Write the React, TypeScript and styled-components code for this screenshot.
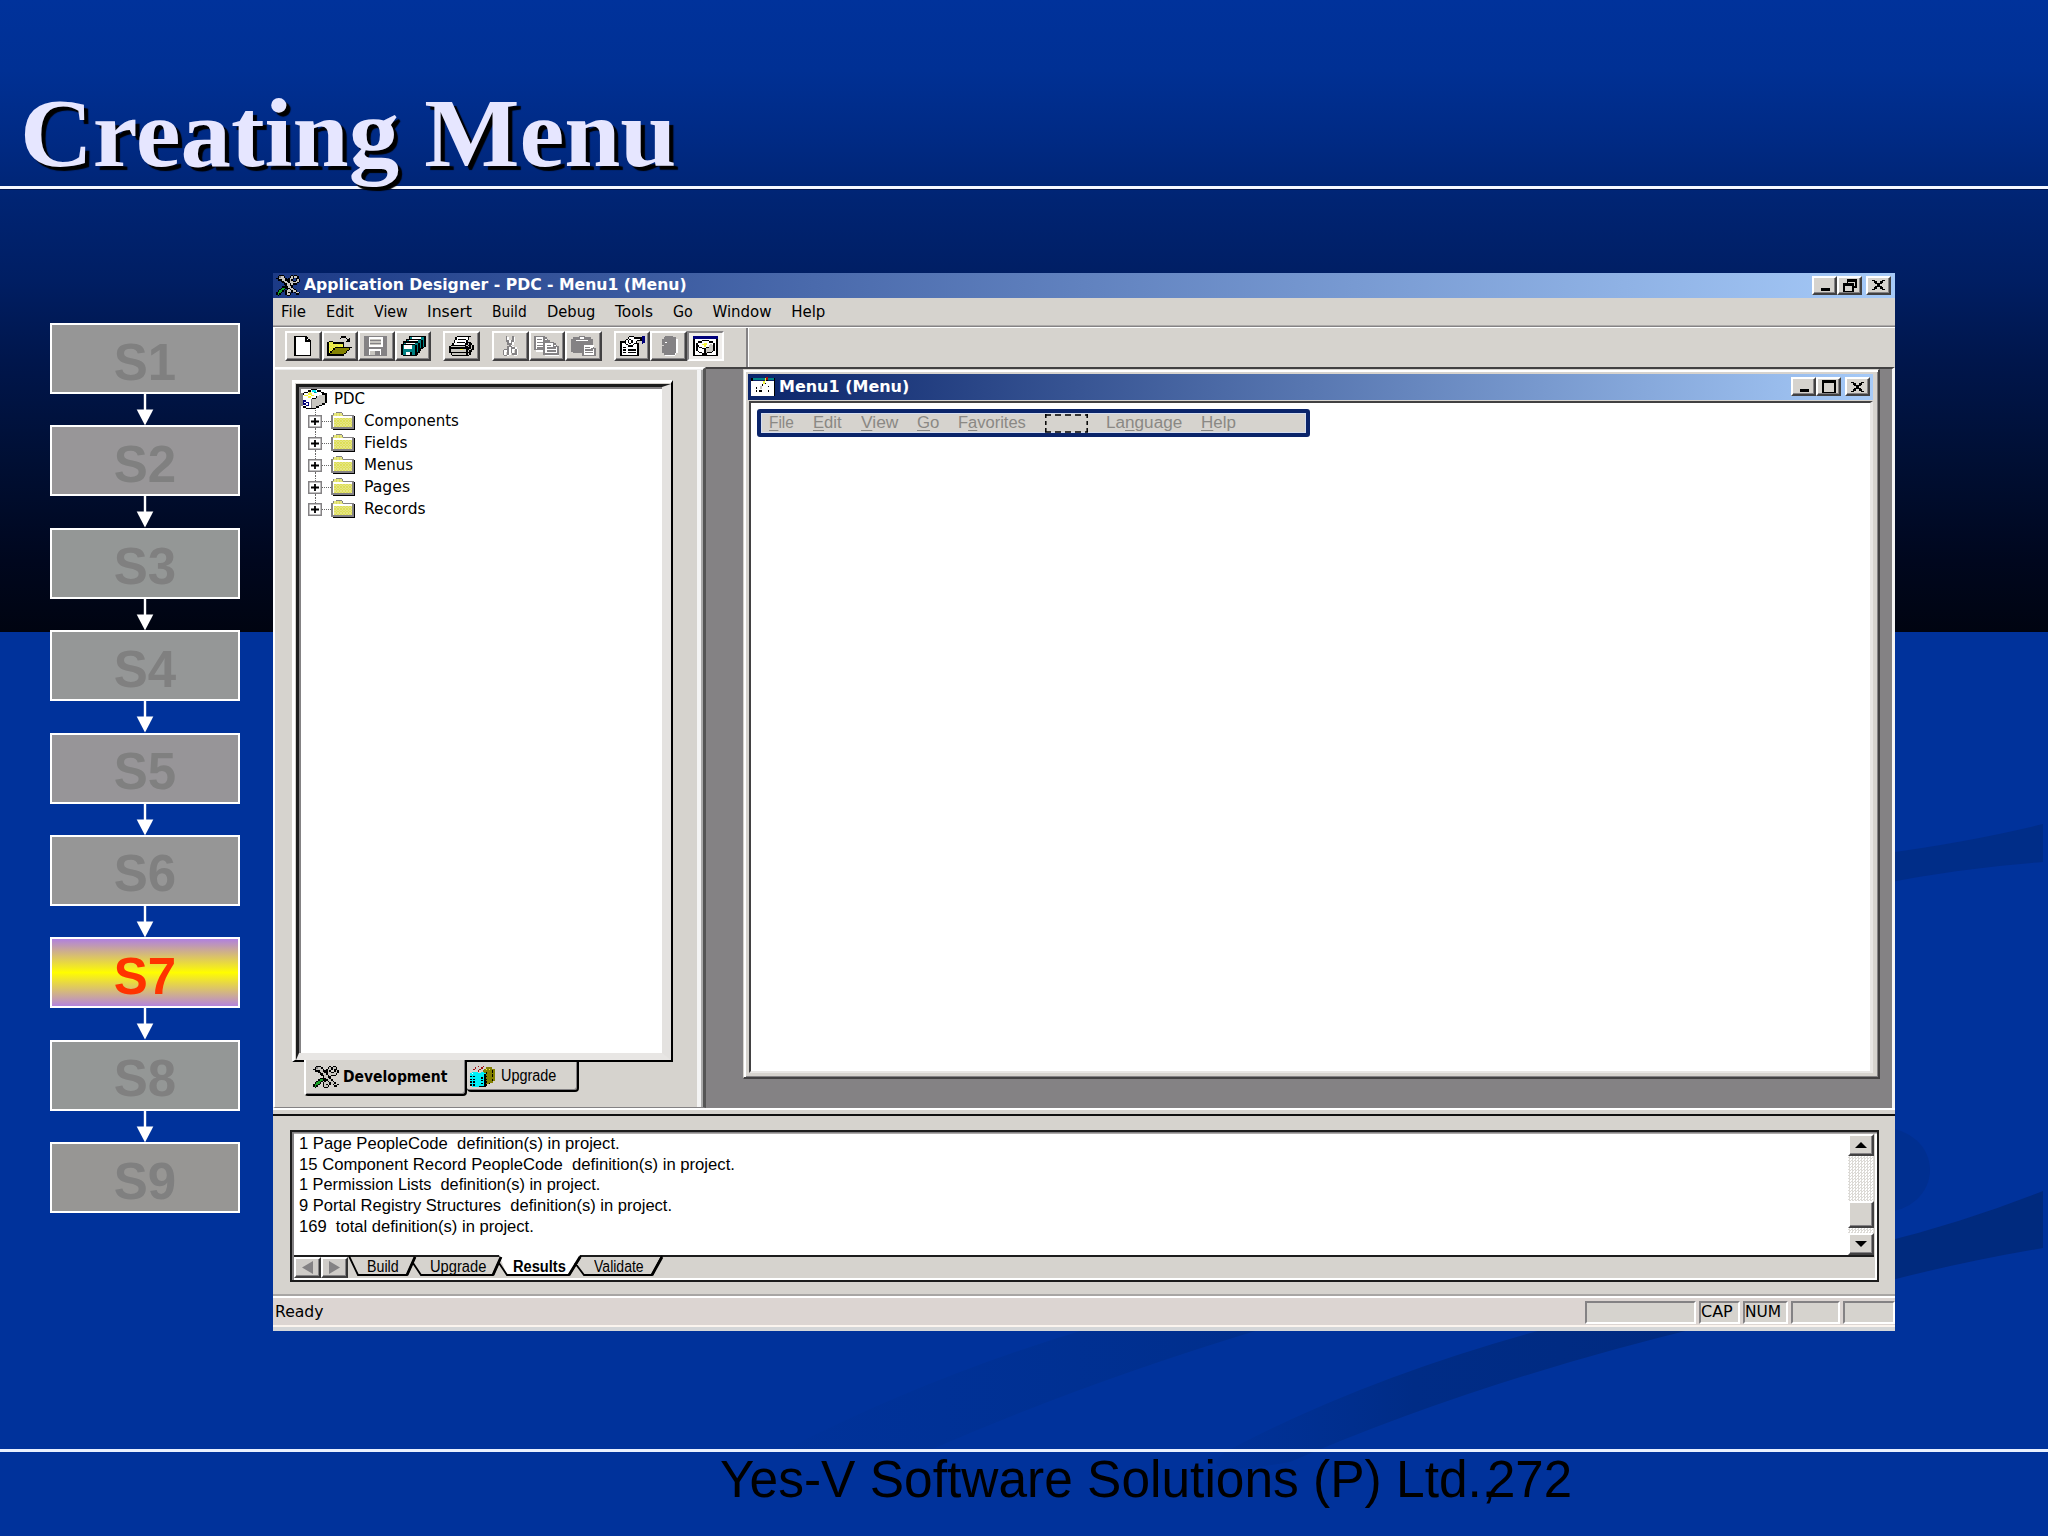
import React, { useLayoutEffect, useRef, useState } from 'react';
import styled, { createGlobalStyle, css } from 'styled-components';

const FACE = '#d6d3ce';
const SHADE = '#848284';
const UI = '"DejaVu Sans", sans-serif';
const SANS = '"Liberation Sans", Arial, sans-serif';

const Global = createGlobalStyle`
  body { margin: 0; background: #00329b; }
  * { box-sizing: border-box; }
`;

/* ---------- text stretched to a set width ---------- */
const FitBox = styled.span<{ $w: number }>`
  display: block;
  flex: none;
  width: ${(p) => p.$w}px;
  white-space: pre;
`;
const FitInner = styled.span`
  display: inline-block;
  transform-origin: 0 50%;
`;
function Fit({ w, children }: { w: number; children: React.ReactNode }) {
  const ref = useRef<HTMLSpanElement>(null);
  const [scale, setScale] = useState(1);
  useLayoutEffect(() => {
    if (ref.current) setScale(w / ref.current.offsetWidth);
  }, [w]);
  return (
    <FitBox $w={w}>
      <FitInner ref={ref} style={{ transform: `scaleX(${scale})` }}>{children}</FitInner>
    </FitBox>
  );
}

/* ---------- bitmap icons ---------- */
const PALETTE: Record<string, string> = {
  K: '#000000', W: '#ffffff', G: '#848284', L: '#c8c6c0', Y: '#f4f43c', O: '#848200',
  T: '#008284', B: '#00007b', C: '#00f0f8', E: '#18a028', R: '#a01010', P: '#dede58', Q: '#e6e684',
};
const IconSvg = styled.svg`
  display: block;
  flex: none;
`;
function Bitmap({ rows, w, h }: { rows: string[]; w: number; h: number }) {
  const cols = Math.max(...rows.map((r) => r.length));
  const cells: React.ReactNode[] = [];
  rows.forEach((row, y) => {
    let x = 0;
    while (x < row.length) {
      const c = row[x];
      let n = 1;
      while (row[x + n] === c) n++;
      if (PALETTE[c]) cells.push(<rect key={`${x}-${y}`} x={x} y={y} width={n} height={1} fill={PALETTE[c]} />);
      x += n;
    }
  });
  return (
    <IconSvg width={w} height={h} viewBox={`0 0 ${cols} ${rows.length}`} preserveAspectRatio="none" shapeRendering="crispEdges">
      {cells}
    </IconSvg>
  );
}

const NEW = [
  '..KKKKKKKK......', '..KWWWWWWKK.....', '..KWWWWWWKWK....', '..KWWWWWWKKKK...', '..KWWWWWWWWWK...',
  '..KWWWWWWWWWK...', '..KWWWWWWWWWK...', '..KWWWWWWWWWK...', '..KWWWWWWWWWK...', '..KWWWWWWWWWK...',
  '..KWWWWWWWWWK...', '..KWWWWWWWWWK...', '..KWWWWWWWWWK...', '..KKKKKKKKKKK...'];
const OPEN = [
  '.........KKK....', '........K...K.K.', '.............KK.', '.KKK........KKK.', 'KYPYKKKKKKK.....', 'KPYPYPYPYPK.....',
  'KYPYPYPYPYK.....', 'KPYPYKKKKKKKKKKK', 'KYPYKOOOOOOOOOK.', 'KPYKOOOOOOOOOK..', 'KYKOOOOOOOOOK...', 'KKOOOOOOOOOK....',
  'KKKKKKKKKKK.....'];
const SAVE = [
  'GGGGGGGGGGGGGGG.', 'GGGWWWWWWWWWGGG.', 'GGGWLLLLLLLWGGG.', 'GGGWGGGGGGGWGGG.', 'GGGWLLLLLLLWGGG.', 'GGGWGGGGGGGWGGG.',
  'GGGWLLLLLLLWGGG.', 'GGGWWWWWWWWWGGG.', 'GGGGGGGGGGGGGGG.', 'GGGGGGGGGGGGGGG.', 'GGGWWWWWWWWGGGG.', 'GGGWLLLGGGWGGGG.',
  'GGGWLLLGGGWGGGG.', 'GGGWLLLGGGWGGGG.', 'GGGGGGGGGGGGGGG.'];
const SAVEALL = [
  '.....KKKKKKKKKKK', '.....KTWWWWWWTTK', '...KKKKKKKKKKTTK', '...KTWWWWWWTTKTK', '.KKKKKKKKKKTTKTK', '.KTWWWWWWTTKTKTK',
  'KKKKKKKKKTTKTKTK', 'KTWWWWWTTKTKTKTK', 'KTWWWWWTTKTKTKK.', 'KTWWWWWTTKTKKK..', 'KTTTTTTTTKTKK...', 'KTTTTTTTTKTK....',
  'KTTWWWKTTKKK....', 'KTTWWWKTTKK.....', '.KKKKKKKKK......'];
const PRINT = [
  '.....KKKKKKKKK..', '....KWWWWWWWK...', '....KWKKKKKWK...', '...KWWWWWWWK....', '...KWKKKKKWKKK..', '..KWWWWWWWKKLKK.',
  '.KKKKKKKKKKLKKLK', 'KLLLLLLLLLKKLKLK', 'KKKKKKKKKKKKKKLK', 'KLLLLLLYYLLKKLKK', 'KLLLLLLLLLLKLKK.', 'KKKKKKKKKKKKKK..',
  '.KLLLLLLLLLKLK..', '..KKKKKKKKKKK...'];
const CUT = [
  '.....G...G......', '.....GW..GW.....', '.....GW..GW.....', '.....GGWGGW.....', '......GWGW......', '......GGGW......',
  '.......GW.......', '......GGGW......', '......GWGGGW....', '....GGGWGWWGW...', '...GWWGWGW.GW...', '...GW.GWGW.GW...',
  '...GW.GW.GGGW...', '....GGW...WW....'];
const COPY = [
  'GGGGGGG.........', 'GWWWWWGG........', 'GWGGGWGWG.......', 'GWWWWWGGGG......', 'GWGGGGGGGGGGG...', 'GWWWWWGWWWWWGG..',
  'GWGGGGGWGGGWGWG.', 'GWWWWWGWWWWWGGGG', 'GWGGGGGWGGGGGGWG', 'GGGGGGGWWWWWWWWG', '.WWWWWGWGGGGGGWG', '......GWWWWWWWWG',
  '......GGGGGGGGGG', '.......WWWWWWWWW'];
const PASTE = [
  '.....GGGG.......', '.GGGGGWWGGGGG...', 'GGGGGGGGGGGGGG..', 'GGGWWWWWWWWGGG..', 'GGGGGGGGGGGGGG..', 'GGGGGGGGGGGGGG..',
  'GGGGGGGGGGGGGG..', 'GGGGGGGGWWWWWWW.', 'GGGGGGGGWGGGWWG.', 'GGGGGGGGWWWWWGGG', 'GGGGGGGGWGGGGGWG', 'GGGGGGGGWWWWWWWG',
  '.GGGGGGGWGGGGGWG', '.......GWWWWWWWG', '.......GGGGGGGGG'];
const PROPS = [
  '......KKK.....BB', '.....KWWWKKKKKBB', '....KWKWWWWWWKBB', '...KWKWKWWWKKKBB', 'KKKKWKWKWWK...BB', 'KWWKWWKWWKKK..B.',
  'KWWWKWWWKWWK....', 'KWWWWKKKWWWK....', 'KWKKWWWWWWWK....', 'KWWWWWWWWWWK....', 'KWKKWKKKKKWK....', 'KWWWWWWWWWWK....',
  'KWKKWKKKKKWK....', 'KWWWWWWWWWWK....', 'KKKKKKKKKKKK....'];
const DATABASE = [
  '......GGGGG.....', '.....GGGGGGGG...', '....GGGGGGGGGW..', '....GGGGGGGGGW..', '....GGWGGGGGGW..', '....GGGGGGGGGW..',
  '.....GGGGGGGGW..', '....GGGGGGGGGW..', '....GGGGGGGGGW..', '....GGGGGGGGGW..', '....GGGGGGGGGW..', '....GGGGGGGGGW..',
  '.....GGGGGGGW...', '......WWWWWW....'];
const PROJVIEW = [
  'BBBBBBBBBBBBBBBB', 'BBBBBBBBBBBBBBBB', 'KWWWWWWWWWWWWWWK', 'KWWWWWKKKKWWWWWK', 'KWWKKKWWWWKKKWWK', 'KWKWWWWYYWWWWKWK',
  'KWKWWWYYYWWLWKWK', 'KWKKWWWYWWLLLKWK', 'KWKWKKWWKKLLLKWK', 'KWKWWWKKLLLLLKWK', 'KWKWWWWKLLLLLKWK', 'KWWKWWWKLLLLKWWK',
  'KWWWKKWKLKKKWWWK', 'KWWWWWKKKWWWWWWK', 'KKKKKKKKKKKKKKKK'];
const TOOLS = [
  '..KKK.....K.KK..', '.KGLLK...KLKLLK.', 'KKLLLLK.KLLK.KK.', '.KKKLLKKKLK..KLK', '...KKLLKKLLKKLLK', '....KKLLKLLLLLK.',
  '.....KKLLKLKKK..', '......KLLKK.....', '....KKKKLLK.....', '...KEEKKKLLK....', '..KEEK.KLKLLK...', '.KEEK.KLLLKLLK..',
  'KEEK..KLK.K.KLLK', 'KEK...KLLK...KK.', '.K.....KK.......'];
const CUBE = [
  '......KKKK......', '....KKWCCWKK....', '..KKWYWWTCWWKK..', 'GKWWYYYWWWWWWKKK', 'GWYYWWYYWWWLLLLK', 'GWWWYYWWWKLLLLLK',
  'GWWWWWWKKLLLLLLK', 'GWWWWWGLLLLLLLLK', 'GBBWWWGLLLLLLLLK', 'GBWBBWGLLLLLLLLK', 'GBBWBWGLLLLLLKK.', 'GWWBBWGLLLLKK...',
  '.KKWWWGLLKK.....', '...KKKKKK.......'];
const FOLDER = [
  '...GGGG.........', '.GQPQPQG........', 'GPQPQPQPGGGGGGG.', 'GWWWWWWWWWWWWWGK', 'GWPQPQPQPQPQPQGK', 'GWQPQPQPQPQPQPGK',
  'GWPQPQPQPQPQPQGK', 'GWQPQPQPQPQPQPGK', 'GWPQPQPQPQPQPQGK', 'GWQPQPQPQPQPQPGK', 'GWPQPQPQPQPQPQGK', 'GGGGGGGGGGGGGGGK',
  '.KKKKKKKKKKKKKKK'];
const UPGRADE = [
  '.....R..R.......', '...R...R..OOOO..', '..R...R..OYOYOOO', '.....R..OOOOOOKO', '.CCCC..CCOKOOOKO', 'CWCCCCCCCCKOOOOO',
  'CCCCCCCCCKOOOOKO', 'KCKCCCCCCKKOOOKO', 'CCCCCCCKCKOOOOOO', 'KCKCCCCCCKKOOOKO', 'CCCCCCCKCKOOOOKO', 'KCKCCCCCCKKOOOO.',
  'CCCCCCCKCKOOK...', 'KCKCCCCCCKK.....', '.CCCCCKKKK......'];
const MENUDOC = [
  '..........R.....', 'KTTTTTTTTYRTTTTK', 'K........YK....K', 'WWWWWWWWYWWWWWWK', 'WWWWWWWWYKWWWWWK', 'WWWWWWWKWWWWWWWK',
  'WWWWWWLWWWWKWWWK', 'WWWKWWLWWWWWWWWK', 'WWWWWWWWWWWWWWWK', 'WWWKWKKWWWWKWWWK', 'WWWWWWWWWWWWWWWK', 'WWWWWWWWWWWWWWWK',
  'WWWWWWWWWWWWWWWK'];
const MIN = ['........', '........', '........', '........', '........', '........', '.KKKKKK.', '.KKKKKK.'];
const MAX = ['KKKKKKKKK', 'KKKKKKKKK', 'K.......K', 'K.......K', 'K.......K', 'K.......K', 'K.......K', 'K.......K', 'KKKKKKKKK'];
const RESTORE = ['..KKKKKK', '..KKKKKK', '..K....K', 'KKKKKK.K', 'KKKKKK.K', 'K....KKK', 'K....K..', 'K....K..', 'KKKKKK..'];
const CLOSE = ['KK....KK', '.KK..KK.', '..KKKK..', '...KK...', '..KKKK..', '.KK..KK.', 'KK....KK'];

/* ---------- slide ---------- */
const Slide = styled.div`
  position: relative;
  width: 2048px;
  height: 1536px;
  overflow: hidden;
  display: flex;
  flex-direction: column;
  background: linear-gradient(#00329b 0, #003094 70px, #002a84 140px, #002473 200px, #001e63 280px,
    #00164c 360px, #000f34 460px, #00071e 560px, #000411 632px, #00329b 632px);
`;
const Swooshes = styled.svg`
  position: absolute;
  inset: 0;
`;
const Header = styled.header`
  position: relative;
  height: 189px;
  flex: none;
  border-bottom: 3px solid #f4f7ff;
  box-shadow: 0 1px 0 #00154f;
  padding: 79px 0 0 20px;
`;
const Title = styled.h1`
  margin: 0;
  font: bold 97px/110px "Liberation Serif", "Times New Roman", serif;
  color: #e6e6ff;
  text-shadow: 4px 4px 1px #000;
`;
const Body = styled.main`
  height: 1260px;
  flex: none;
  display: flex;
  align-items: flex-start;
  padding-left: 50px;
  isolation: isolate;
`;
const Footer = styled.footer`
  position: relative;
  flex: 1;
  display: flex;
  border-top: 3px solid #e8f0ff;
  padding: 0 0 0 720px;
  font: 51px/56px ${SANS};
  color: #000;
`;
const PageNo = styled.div`
  margin-left: -9px;
`;

/* ---------- step chart ---------- */
const Steps = styled.div`
  margin-top: 134px;
  width: 190px;
`;
const Step = styled.div<{ $active: boolean; $tone: string }>`
  height: 71px;
  border: 2.5px solid #fff;
  display: flex;
  align-items: center;
  justify-content: center;
  padding-top: 8px;
  font: bold 51px/60px ${SANS};
  color: ${(p) => (p.$active ? '#ff3300' : '#808080')};
  background: ${(p) => (p.$active ? 'linear-gradient(#b080e0, #fffd00 50%, #b484dc)' : p.$tone)};
`;
const Arrow = styled.svg`
  display: block;
  margin: 0 auto;
`;

/* ---------- window ---------- */
const AppWindow = styled.section`
  margin: 84px 0 0 33px;
  width: 1622px;
  height: 1058px;
  background: ${FACE};
  display: flex;
  flex-direction: column;
  font: 15px/20px ${UI};
  color: #000;
`;
const TitleBar = styled.div<{ $child?: boolean }>`
  height: ${(p) => (p.$child ? 26 : 25)}px;
  flex: none;
  display: flex;
  align-items: center;
  gap: 4px;
  padding: 0 ${(p) => (p.$child ? 3 : 4)}px 1px ${(p) => (p.$child ? 3 : 3)}px;
  background: ${(p) => (p.$child ? 'linear-gradient(90deg, #0a246a, #a6caf8)' : 'linear-gradient(90deg, #1c3a86, #a6caf8)')};
  color: #fff;
  font-weight: bold;
`;
const Caption = styled.div`
  flex: 1;
`;
const raised = css`
  border-style: solid;
  border-width: 2px;
  border-color: #fff #424142 #424142 #fff;
  box-shadow: inset -1px -1px 0 ${SHADE};
`;
const WinButtons = styled.div`
  display: flex;
  align-items: center;
`;
const WinButton = styled.span<{ $gap?: boolean }>`
  ${raised}
  width: 25px;
  height: 19px;
  margin-left: ${(p) => (p.$gap ? 4 : 0)}px;
  background: ${FACE};
  display: flex;
  align-items: center;
  justify-content: center;
`;
const MenuBar = styled.nav`
  height: 30px;
  flex: none;
  display: flex;
  align-items: center;
  gap: 19.8px;
  padding: 0 0 1px 8px;
  border-bottom: 1px solid #fff;
  box-shadow: inset 0 -1.5px 0 ${SHADE};
`;
const ToolBar = styled.div`
  height: 39px;
  flex: none;
  display: flex;
  padding: 3px 0 0 10px;
  border-left: 2px solid #fff;
`;
const ToolGroup = styled.div`
  display: flex;
  height: 30px;
  margin-right: 12px;
`;
const Tool = styled.span<{ $pressed?: boolean }>`
  ${raised}
  width: 36.6px;
  background: ${FACE};
  display: flex;
  align-items: center;
  justify-content: center;
  ${(p) => p.$pressed && css`
    border-color: ${SHADE} #fff #fff ${SHADE};
    box-shadow: none;
    background: #f0eeec;
  `}
`;
const ToolEnd = styled.span`
  width: 3px;
  height: 39px;
  margin: -3px 0 0 10px;
  background: linear-gradient(90deg, ${SHADE} 50%, #fff 50%);
`;
const Workspace = styled.div`
  height: 741px;
  flex: none;
  display: flex;
`;
const Side = styled.aside`
  width: 433px;
  flex: none;
  padding: 11px 0 0 17px;
  border-style: solid;
  border-width: 2px 3px 1px 2px;
  border-color: #fff #555 ${SHADE} #fff;
  box-shadow: inset 0 1px 0 #eee, inset -2px 0 0 #aaa, inset -6px 0 0 #f4f4f4;
`;
const TreeFrame = styled.div`
  width: 381px;
  height: 682px;
  border-style: solid;
  border-width: 3px 2px 2px 3px;
  border-color: #fff #000 #000 #fff;
  padding: 1px 0 0 1px;
`;
const Tree = styled.div`
  height: 100%;
  background: #fff;
  border-style: solid;
  border-width: 3px 9px 7px 3px;
  border-color: #1c1c1c #e4e2e0 #e8e6e4 #1c1c1c;
  box-shadow: inset 2px 2px 0 ${SHADE};
  padding: 1px 0 0 2px;
`;
const TreeRow = styled.div<{ $root?: boolean }>`
  height: 22px;
  display: flex;
  align-items: center;
  padding-left: ${(p) => (p.$root ? 0 : 7)}px;
  gap: ${(p) => (p.$root ? 7 : 0)}px;
`;
const Expander = styled.span`
  width: 14px;
  height: 22px;
  display: flex;
  flex-direction: column;
  align-items: center;
`;
const VDots = styled.span<{ $off?: boolean }>`
  height: 5px;
  border-left: 1.5px dotted ${(p) => (p.$off ? 'transparent' : '#666')};
`;
const PlusBox = styled.svg`
  display: block;
  flex: none;
`;
const HDots = styled.span`
  width: 9px;
  border-top: 1.5px dotted #666;
`;
const FolderSlot = styled.span`
  width: 33px;
`;
const SideTabs = styled.div`
  display: flex;
  align-items: flex-start;
  margin: -2px 0 0 12px;
`;
const SideTab = styled.div<{ $active?: boolean }>`
  width: ${(p) => (p.$active ? 163 : 112)}px;
  height: ${(p) => (p.$active ? 36 : 32)}px;
  display: flex;
  align-items: center;
  gap: ${(p) => (p.$active ? 4 : 6)}px;
  padding-left: ${(p) => (p.$active ? 7 : 3)}px;
  background: ${FACE};
  border: solid #000;
  border-width: ${(p) => (p.$active ? '0 2px 2px 2px' : '2px 2px 2px 0')};
  border-left-color: #fff;
  border-radius: 0 0 4px 4px;
  box-shadow: inset -1px -1px 0 ${SHADE};
  font: ${(p) => (p.$active ? 'bold 15px/20px ' + UI : '16px/20px ' + SANS)};
`;
const Mdi = styled.div`
  flex: 1;
  background: ${SHADE};
  border-top: 2px solid #424142;
  border-right: 3px solid #f4f4f4;
  padding: 0 0 0 37px;
`;
const Child = styled.section`
  width: 1137px;
  height: 710px;
  background: ${FACE};
  border-style: solid;
  border-width: 1px 2px 2px 1px;
  border-color: ${FACE} #424142 #424142 ${FACE};
  box-shadow: inset 2px 2px 0 #fff, inset -1px -1px 0 ${SHADE};
  padding: 4px 5px 4px 4px;
  display: flex;
  flex-direction: column;
`;
const ChildBody = styled.div`
  flex: 1;
  margin: 1px 0 0 1px;
  background: #fff;
  border-style: solid;
  border-width: 2px 3px 2px 2px;
  border-color: #424142 #e8e6e4 #e8e6e4 #424142;
  padding: 6px 0 0 6px;
`;
const MenuDesign = styled.div`
  width: 553px;
  height: 28px;
  border: 4px solid #0a246a;
  border-radius: 3px;
  background: ${FACE};
  box-shadow: inset 0 0 0 1px #d4ddf0;
  display: flex;
  align-items: center;
  gap: 19px;
  padding-left: 8px;
  font: 16px/18px ${SANS};
  color: #8a8884;
`;
const Accel = styled.span`
  text-decoration: underline;
  text-underline-offset: 2px;
`;
const Dashed = styled.svg`
  display: block;
  flex: none;
  margin-right: -1px;
`;
const Splitter = styled.div`
  height: 8px;
  flex: none;
  border-top: 2px solid #fff;
  border-bottom: 2px solid #111;
`;
const Output = styled.div`
  height: 180px;
  flex: none;
  padding: 14px 16px 0 17px;
  border-bottom: 2px solid #a8a6a4;
`;
const OutFrame = styled.div`
  height: 152px;
  border: 2px solid #1c1c1c;
  box-shadow: inset 2px 1.5px 0 ${SHADE}, inset -2px -2px 0 #fff;
  padding: 2px 3px 3px 2px;
`;
const OutTop = styled.div`
  height: 123px;
  display: flex;
  background: #fff;
  border-bottom: 2px solid #1c1c1c;
`;
const Lines = styled.div`
  flex: 1;
  font: 16px/20.7px ${SANS};
  padding-left: 5px;
`;
const Scroll = styled.div`
  width: 26px;
  display: flex;
  flex-direction: column;
  background: repeating-conic-gradient(#dcdad6 0 25%, #fff 0 50%) 0 0 / 3px 3px;
`;
const ScrollPart = styled.span<{ $h: number; $mt?: number }>`
  ${raised}
  height: ${(p) => p.$h}px;
  margin-top: ${(p) => p.$mt ?? 0}px;
  background: ${FACE};
  display: flex;
  align-items: center;
  justify-content: center;
`;
const Tri = styled.svg`
  display: block;
`;
const OutBottom = styled.div`
  height: 20px;
  display: flex;
  font: 16px/20px ${SANS};
`;
const NavButton = styled.span`
  ${raised}
  width: 27px;
  height: 21px;
  background: #cfccc8;
  border-right-color: #333;
  display: flex;
  align-items: center;
  justify-content: center;
`;
const SheetTabs = styled.div`
  position: relative;
  width: 320px;
  height: 20px;
`;
const SheetShapes = styled.svg`
  position: absolute;
  left: 0;
  top: -2px;
`;
const SheetLabels = styled.div`
  position: relative;
  display: flex;
  padding-left: 19px;
`;
const SheetLabel = styled.span<{ $ml: number; $active?: boolean }>`
  margin-left: ${(p) => p.$ml}px;
  font-weight: ${(p) => (p.$active ? 'bold' : 'normal')};
`;
const Status = styled.div`
  flex: 1;
  display: flex;
  align-items: center;
  background: #dcd5d2;
  border-top: 2px solid #fff;
  border-bottom: 4px solid #d4d6d8;
  box-shadow: inset 0 -2px 0 #fbf4ee;
  padding: 0 0 1px 2px;
`;
const StatusText = styled.span`
  flex: 1;
`;
const Pane = styled.span<{ $w: number }>`
  width: ${(p) => p.$w}px;
  height: 23px;
  margin-left: 3px;
  background: ${FACE};
  border-style: solid;
  border-width: 2px;
  border-color: ${SHADE} #fff #fff ${SHADE};
  display: flex;
  align-items: center;
`;

const steps = ['S1', 'S2', 'S3', 'S4', 'S5', 'S6', 'S7', 'S8', 'S9'];
const tones = ['#969696', '#989698', '#949796', '#959797', '#979598', '#969696', '', '#949796', '#979694'];
const menus: [string, number][] = [['File', 25], ['Edit', 28], ['View', 34], ['Insert', 45], ['Build', 35], ['Debug', 48], ['Tools', 38], ['Go', 20], ['Window', 59], ['Help', 34]];
const folders: [string, number][] = [['Components', 95], ['Fields', 43], ['Menus', 49], ['Pages', 46], ['Records', 62]];
const toolGroups = [[NEW, OPEN, SAVE, SAVEALL], [PRINT], [CUT, COPY, PASTE], [PROPS, DATABASE, PROJVIEW]];
const results: [string, number][] = [
  ['1 Page PeopleCode  definition(s) in project.', 321],
  ['15 Component Record PeopleCode  definition(s) in project.', 436],
  ['1 Permission Lists  definition(s) in project.', 301],
  ['9 Portal Registry Structures  definition(s) in project.', 373],
  ['169  total definition(s) in project.', 235],
];

function DesignItem({ text, k, w }: { text: string; k: number; w: number }) {
  return <Fit w={w}>{text.slice(0, k)}<Accel>{text[k]}</Accel>{text.slice(k + 1)}</Fit>;
}
function WindowButtons({ middle }: { middle: string[] }) {
  return (
    <WinButtons>
      <WinButton><Bitmap rows={MIN} w={12} h={11} /></WinButton>
      <WinButton><Bitmap rows={middle} w={14} h={13} /></WinButton>
      <WinButton $gap><Bitmap rows={CLOSE} w={13} h={10} /></WinButton>
    </WinButtons>
  );
}

export default function App() {
  return (
    <Slide>
      <Global />
      <Swooshes width="2048" height="1536">
        <defs>
          <linearGradient id="fadeA" x1="0" x2="1"><stop offset="0" stopColor="#003090" stopOpacity="0.1" /><stop offset="1" stopColor="#002e8b" /></linearGradient>
          <linearGradient id="fadeB" x1="0" x2="1"><stop offset="0" stopColor="#002f90" stopOpacity="0.3" /><stop offset="0.4" stopColor="#002c86" /><stop offset="1" stopColor="#002a80" /></linearGradient>
        </defs>
        <path d="M1880 854Q1970 842 2043 824V862Q1960 868 1880 884Z" fill="#002d88" />
        <path d="M1880 1243Q1965 1222 2043 1191V1248Q1960 1262 1880 1283Z" fill="#002a7e" />
        <ellipse cx="1884" cy="1170" rx="46" ry="42" fill="#002f90" />
        <path d="M1100 1325Q930 1375 785 1450L930 1450Q1090 1380 1275 1325Z" fill="url(#fadeA)" />
        <path d="M1560 1325Q1370 1375 1225 1452Q1190 1480 1290 1462Q1480 1380 1710 1325Z" fill="url(#fadeB)" />
      </Swooshes>
      <Header><Title><Fit w={656}>Creating Menu</Fit></Title></Header>
      <Body>
        <Steps>
          {steps.map((s, i) => (
            <React.Fragment key={s}>
              {i > 0 && (
                <Arrow width="18" height="31.4" viewBox="0 0 18 31.4">
                  <path d="M9 0V18" stroke="#fff" strokeWidth="2.4" />
                  <path d="M.7 15.5H17.3L9 31.4Z" fill="#fff" />
                </Arrow>
              )}
              <Step $active={s === 'S7'} $tone={tones[i]}>{s}</Step>
            </React.Fragment>
          ))}
        </Steps>
        <AppWindow>
          <TitleBar>
            <Bitmap rows={TOOLS} w={24} h={21} />
            <Caption><Fit w={383}>Application Designer - PDC - Menu1 (Menu)</Fit></Caption>
            <WindowButtons middle={RESTORE} />
          </TitleBar>
          <MenuBar>{menus.map(([m, w]) => <Fit key={m} w={w}>{m}</Fit>)}</MenuBar>
          <ToolBar>
            {toolGroups.map((g, i) => (
              <ToolGroup key={i}>
                {g.map((rows, j) => (
                  <Tool key={j} $pressed={rows === PROJVIEW}><Bitmap rows={rows} w={25} h={20} /></Tool>
                ))}
              </ToolGroup>
            ))}
            <ToolEnd />
          </ToolBar>
          <Workspace>
            <Side>
              <TreeFrame>
                <Tree>
                  <TreeRow $root><Bitmap rows={CUBE} w={26} h={20} /><Fit w={31}>PDC</Fit></TreeRow>
                  {folders.map(([f, w], i) => (
                    <TreeRow key={f}>
                      <Expander>
                        <VDots />
                        <PlusBox width="14" height="13" viewBox="0 0 14 13">
                          <rect x=".75" y=".75" width="12.5" height="11.5" fill="#fff" stroke="#848284" strokeWidth="1.5" />
                          <path d="M3 6.5H11M7 3V10" stroke="#000" strokeWidth="1.8" />
                        </PlusBox>
                        <VDots $off={i === folders.length - 1} />
                      </Expander>
                      <HDots />
                      <FolderSlot><Bitmap rows={FOLDER} w={24} h={18} /></FolderSlot>
                      <Fit w={w}>{f}</Fit>
                    </TreeRow>
                  ))}
                </Tree>
              </TreeFrame>
              <SideTabs>
                <SideTab $active><Bitmap rows={TOOLS} w={26} h={22} /><Fit w={104}>Development</Fit></SideTab>
                <SideTab><Bitmap rows={UPGRADE} w={25} h={21} /><Fit w={55}>Upgrade</Fit></SideTab>
              </SideTabs>
            </Side>
            <Mdi>
              <Child>
                <TitleBar $child>
                  <Bitmap rows={MENUDOC} w={24} h={19} />
                  <Caption><Fit w={130}>Menu1 (Menu)</Fit></Caption>
                  <WindowButtons middle={MAX} />
                </TitleBar>
                <ChildBody>
                  <MenuDesign>
                    <DesignItem text="File" k={0} w={25} />
                    <DesignItem text="Edit" k={0} w={29} />
                    <DesignItem text="View" k={0} w={37} />
                    <DesignItem text="Go" k={0} w={22} />
                    <DesignItem text="Favorites" k={1} w={68} />
                    <Dashed width="43" height="19">
                      <path d="M0 1H43M0 18H43" stroke="#000" strokeWidth="1.6" strokeDasharray="6 4" />
                      <path d="M.8 0V19M42.2 0V19" stroke="#000" strokeWidth="1.5" strokeDasharray="4 3" />
                    </Dashed>
                    <DesignItem text="Language" k={2} w={76} />
                    <DesignItem text="Help" k={0} w={35} />
                  </MenuDesign>
                </ChildBody>
              </Child>
            </Mdi>
          </Workspace>
          <Splitter />
          <Output>
            <OutFrame>
              <OutTop>
                <Lines>{results.map(([t, w]) => <Fit key={t} w={w}>{t}</Fit>)}</Lines>
                <Scroll>
                  <ScrollPart $h={22}><Tri width="12" height="6"><path d="M0 6L6 0L12 6Z" /></Tri></ScrollPart>
                  <ScrollPart $h={27} $mt={45} />
                  <ScrollPart $h={22} $mt={5}><Tri width="12" height="6"><path d="M0 0H12L6 6Z" /></Tri></ScrollPart>
                </Scroll>
              </OutTop>
              <OutBottom>
                <NavButton><Tri width="11" height="13"><path d="M11 0V13L0 6.5Z" fill="#848284" /></Tri></NavButton>
                <NavButton><Tri width="11" height="13"><path d="M0 0V13L11 6.5Z" fill="#848284" /></Tri></NavButton>
                <SheetTabs>
                  <SheetShapes width="320" height="22">
                    <path d="M151 0L159 20H221L232 0Z" fill="#fff" />
                    <g fill="none" stroke="#000" strokeWidth="1.8">
                      <path d="M1 1L10 20H59L67 2M65 8L73 20H145L153 2M151 8L159 20H221L233 1M227 8L236 20H304L314 1" />
                      <path d="M59 20L67 2M145 20L153 2M221 20L232 2M304 20L314 2" strokeWidth="2.8" />
                    </g>
                  </SheetShapes>
                  <SheetLabels>
                    <SheetLabel $ml={0}><Fit w={32}>Build</Fit></SheetLabel>
                    <SheetLabel $ml={31}><Fit w={56}>Upgrade</Fit></SheetLabel>
                    <SheetLabel $ml={27} $active><Fit w={53}>Results</Fit></SheetLabel>
                    <SheetLabel $ml={28}><Fit w={50}>Validate</Fit></SheetLabel>
                  </SheetLabels>
                </SheetTabs>
              </OutBottom>
            </OutFrame>
          </Output>
          <Status>
            <StatusText><Fit w={49}>Ready</Fit></StatusText>
            <Pane $w={111} />
            <Pane $w={41}><Fit w={32}>CAP</Fit></Pane>
            <Pane $w={45}><Fit w={36}>NUM</Fit></Pane>
            <Pane $w={49} />
            <Pane $w={52} />
          </Status>
        </AppWindow>
      </Body>
      <Footer>
        <Fit w={776}>Yes-V Software Solutions (P) Ltd.,</Fit>
        <PageNo>272</PageNo>
      </Footer>
    </Slide>
  );
}
